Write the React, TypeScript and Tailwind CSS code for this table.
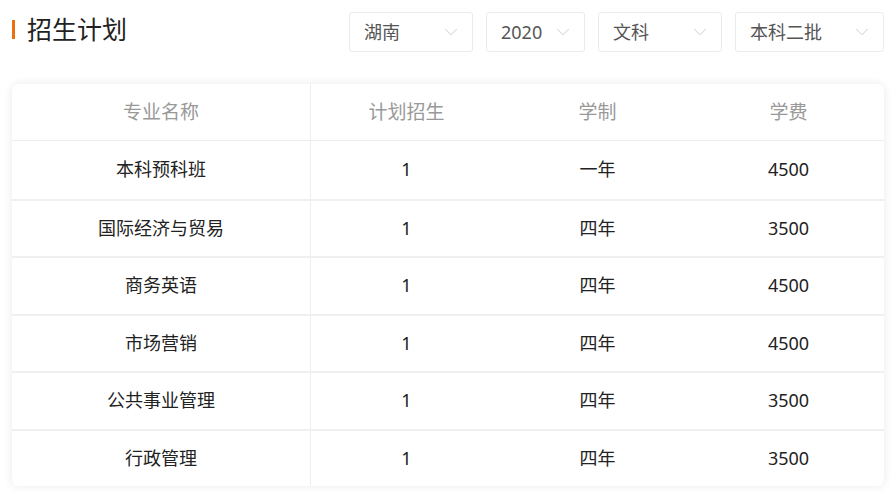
import { ChevronDown } from "lucide-react";

const rows = [
  { name: "本科预科班", plan: "1", years: "一年", fee: "4500" },
  { name: "国际经济与贸易", plan: "1", years: "四年", fee: "3500" },
  { name: "商务英语", plan: "1", years: "四年", fee: "4500" },
  { name: "市场营销", plan: "1", years: "四年", fee: "4500" },
  { name: "公共事业管理", plan: "1", years: "四年", fee: "3500" },
  { name: "行政管理", plan: "1", years: "四年", fee: "3500" },
];

const selects = [
  { label: "湖南", w: "w-[124px]" },
  { label: "2020", w: "w-[99px]" },
  { label: "文科", w: "w-[124px]" },
  { label: "本科二批", w: "w-[149px]" },
];

function Select({ label, w }: { label: string; w: string }) {
  return (
    <div
      className={`${w} h-[40px] flex items-center justify-between pl-[14px] pr-[10px] bg-white border border-[#ebebeb] rounded-[3px] text-[18px] text-[#555]`}
    >
      <span>{label}</span>
      <ChevronDown className="w-[22px] h-[22px] text-[#c4c4c4]" strokeWidth={0.9} />
    </div>
  );
}

export default function App() {
  return (
    <div
      className="w-[896px] h-[497px] bg-white px-3 pt-3"
      style={{ fontFamily: '"Noto Sans", "Noto Sans CJK SC", sans-serif' }}
    >
      {/* Header */}
      <div className="flex items-start justify-between">
        <div className="flex items-center gap-[12px] pt-[1px]">
          <div className="w-[3px] h-[19px] bg-[#ea6f0f]" />
          <h1 className="text-[25px] leading-[32px] text-[#222]">招生计划</h1>
        </div>
        <div className="flex gap-[13px]">
          {selects.map((s) => (
            <Select key={s.label} label={s.label} w={s.w} />
          ))}
        </div>
      </div>

      {/* Table */}
      <div className="mt-[32px] bg-white rounded-[6px] shadow-[0_0_10px_rgba(0,0,0,0.09)] overflow-hidden">
        <div className="grid grid-cols-[299px_1fr_1fr_1fr] h-[57px] items-center border-b border-[#ececec] text-[19px] text-[#999] text-center">
          <div className="h-full flex items-center justify-center border-r border-[#eee]">专业名称</div>
          <div>计划招生</div>
          <div>学制</div>
          <div>学费</div>
        </div>
        {rows.map((r, i) => (
          <div
            key={r.name}
            className={`grid grid-cols-[299px_1fr_1fr_1fr] h-[57.5px] items-center text-[18px] text-[#222] text-center ${
              i > 0 ? "border-t-2 border-[#efefef]" : ""
            }`}
          >
            <div className="h-full flex items-center justify-center border-r border-[#eee]">{r.name}</div>
            <div>{r.plan}</div>
            <div>{r.years}</div>
            <div>{r.fee}</div>
          </div>
        ))}
      </div>
    </div>
  );
}
